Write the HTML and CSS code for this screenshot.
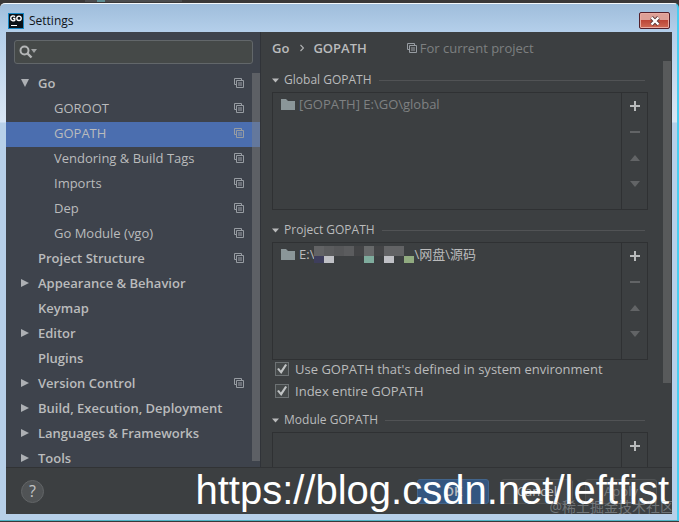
FILE: index.html
```html
<!DOCTYPE html>
<html lang="en">
<head>
<meta charset="utf-8">
<title>Settings</title>
<link rel="stylesheet" href="styles.css">
</head>
<body>
<svg class="defs" aria-hidden="true">
  <symbol id="copy" viewBox="0 0 10 10"><path d="M2.5 6.5H.5V.5h7v2M2.5 2.5h7v7h-7zM4 5h4M4 7h4" fill="none" stroke="currentColor"/></symbol>
  <symbol id="folder" viewBox="0 0 14 11"><path d="M0 0h5l2 2h7v9H0z" fill="#8b9699"/></symbol>
  <symbol id="right" viewBox="0 0 8 8"><path d="M0 0l8 4-8 4z" fill="currentColor"/></symbol>
  <symbol id="open" viewBox="0 0 8 8"><path d="M0 0h8L4 8z" fill="currentColor"/></symbol>
  <symbol id="down" viewBox="0 0 10 6"><path d="M0 0h10L5 6z" fill="currentColor"/></symbol>
  <symbol id="up" viewBox="0 0 10 6"><path d="M0 6h10L5 0z" fill="currentColor"/></symbol>
  <symbol id="plus" viewBox="0 0 10 10"><path d="M5 0v10M0 5h10" stroke="currentColor" stroke-width="2"/></symbol>
  <symbol id="minus" viewBox="0 0 10 10"><path d="M0 5h10" stroke="currentColor" stroke-width="2"/></symbol>
</svg>
<div class="backdrop"><span class="tab"></span></div>
<div class="window">
  <header class="titlebar">
    <svg class="logo" viewBox="0 0 16 16" aria-hidden="true"><path d="M0 0h16v16H0z" fill="#1787c4"/><path d="M1 1h14v14H1z" fill="#0a1218"/><path d="M7 3.600C5.500 2.300 2.700 2.700 2.700 5.300S5.600 8.400 6.800 7.200V5.500H5" fill="none" stroke="#fff" stroke-width="1.400"/><ellipse cx="11" cy="5.300" rx="2.200" ry="2.200" fill="none" stroke="#fff" stroke-width="1.400"/><path d="M3 12.500h6" stroke="#fff"/></svg>
    <h1>Settings</h1>
    <button class="close" aria-label="Close"><svg viewBox="0 0 12 10"><path d="M2.500 1.500l7 7M9.500 1.500l-7 7" stroke="#5a3535" stroke-width="4"/><path d="M2.500 1.500l7 7M9.500 1.500l-7 7" stroke="#fff" stroke-width="2.400"/></svg></button>
  </header>
  <div class="dialog">
    <div class="body">
      <aside class="sidebar">
        <div class="search">
          <svg viewBox="0 0 18 14" aria-hidden="true"><circle cx="5.500" cy="5.500" r="4" fill="none" stroke="#b4b6b7" stroke-width="2"/><path d="M8.500 8.500l4 4" stroke="#b4b6b7" stroke-width="2.400"/><path d="M12 4h6l-3 4z" fill="#a0a2a3"/></svg>
          <input type="text" aria-label="Search settings">
        </div>
        <ul class="tree">
          <li class="top"><svg class="arrow"><use href="#open"/></svg><span>Go</span><svg class="copy"><use href="#copy"/></svg></li>
          <li class="sub"><span>GOROOT</span><svg class="copy"><use href="#copy"/></svg></li>
          <li class="sub selected"><span>GOPATH</span><svg class="copy"><use href="#copy"/></svg></li>
          <li class="sub"><span>Vendoring &amp; Build Tags</span><svg class="copy"><use href="#copy"/></svg></li>
          <li class="sub"><span>Imports</span><svg class="copy"><use href="#copy"/></svg></li>
          <li class="sub"><span>Dep</span><svg class="copy"><use href="#copy"/></svg></li>
          <li class="sub"><span>Go Module (vgo)</span><svg class="copy"><use href="#copy"/></svg></li>
          <li class="top leaf"><span>Project Structure</span><svg class="copy"><use href="#copy"/></svg></li>
          <li class="top"><svg class="arrow"><use href="#right"/></svg><span>Appearance &amp; Behavior</span></li>
          <li class="top leaf"><span>Keymap</span></li>
          <li class="top"><svg class="arrow"><use href="#right"/></svg><span>Editor</span></li>
          <li class="top leaf"><span>Plugins</span></li>
          <li class="top"><svg class="arrow"><use href="#right"/></svg><span>Version Control</span><svg class="copy"><use href="#copy"/></svg></li>
          <li class="top"><svg class="arrow"><use href="#right"/></svg><span>Build, Execution, Deployment</span></li>
          <li class="top"><svg class="arrow"><use href="#right"/></svg><span>Languages &amp; Frameworks</span></li>
          <li class="top"><svg class="arrow"><use href="#right"/></svg><span>Tools</span></li>
        </ul>
        <div class="side-scroll"></div>
      </aside>
      <main class="page">
        <div class="crumbs"><b>Go</b><svg class="chevron" viewBox="0 0 4 8"><path d="M.5 1l3 3-3 3" fill="none" stroke="#b0b2b3" stroke-width="1.200"/></svg><b>GOPATH</b><span class="scope"><svg class="copy"><use href="#copy"/></svg>For current project</span></div>
        <section>
          <h2><svg><use href="#down"/></svg>Global GOPATH</h2>
          <div class="box">
            <div class="paths dim"><svg class="folder"><use href="#folder"/></svg><span>[GOPATH] E:\GO\global</span></div>
            <div class="tools">
              <button aria-label="Add" class="on"><svg><use href="#plus"/></svg></button>
              <button aria-label="Remove"><svg><use href="#minus"/></svg></button>
              <button aria-label="Move up"><svg class="tri"><use href="#up"/></svg></button>
              <button aria-label="Move down"><svg class="tri"><use href="#down"/></svg></button>
            </div>
          </div>
        </section>
        <section>
          <h2><svg><use href="#down"/></svg>Project GOPATH</h2>
          <div class="box">
            <div class="paths"><svg class="folder"><use href="#folder"/></svg><span>E:\</span><svg class="mosaic" viewBox="0 0 100 17" aria-hidden="true"><path d="M0 0h10v10H0z" fill="#626365"/><path d="M10 0h30v10H10z" fill="#5b5c5e"/><path d="M20 0h10v10H20z" fill="#565759"/><path d="M40 0h10v10H40zM60 0h10v10H60z" fill="#434446"/><path d="M50 0h10v10H50z" fill="#67696a"/><path d="M70 0h20v10H70z" fill="#626365"/><path d="M0 10h10v7H0z" fill="#3e3e5c"/><path d="M10 10h10v7H10zM70 10h10v7H70z" fill="#bfc0c5"/><path d="M50 10h10v7H50z" fill="#7fac9d"/><path d="M90 10h10v7H90z" fill="#91ab80"/></svg><span>\网盘\源码</span></div>
            <div class="tools">
              <button aria-label="Add" class="on"><svg><use href="#plus"/></svg></button>
              <button aria-label="Remove"><svg><use href="#minus"/></svg></button>
              <button aria-label="Move up"><svg class="tri"><use href="#up"/></svg></button>
              <button aria-label="Move down"><svg class="tri"><use href="#down"/></svg></button>
            </div>
          </div>
          <div class="checks">
            <label><input type="checkbox" checked>Use GOPATH that's defined in system environment</label>
            <label><input type="checkbox" checked>Index entire GOPATH</label>
          </div>
        </section>
        <section>
          <h2><svg><use href="#down"/></svg>Module GOPATH</h2>
          <div class="box">
            <div class="paths"></div>
            <div class="tools"><button aria-label="Add" class="on"><svg><use href="#plus"/></svg></button></div>
          </div>
        </section>
        <div class="page-scroll"></div>
      </main>
    </div>
    <footer class="footer">
      <button class="help" aria-label="Help">?</button>
      <button class="action primary">OK</button>
      <button class="action">Cancel</button>
      <button class="action off">Apply</button>
    </footer>
  </div>
</div>
<div class="url-mark">https://blog.csdn.net/leftfist</div>
<div class="site-mark">@稀土掘金技术社区</div>
</body>
</html>
```

FILE: styles.css
```css
* { box-sizing: border-box; }

body {
  margin: 0;
  height: 100vh;
  overflow: hidden;
  position: relative;
  display: flex;
  flex-direction: column;
  background: #3a3838;
  color: #babbbc;
  font: 13px/20px "Open Sans", "Noto Sans CJK SC", sans-serif;
}

.defs { position: absolute; width: 0; height: 0; }
svg { display: block; flex: none; }
button { padding: 0; border: 0; background: none; color: inherit; font: inherit; }
h1, h2 { margin: 0; font-weight: 400; }
b { font-weight: 600; }

.backdrop { height: 3px; flex: none; }
.tab { display: block; width: 97px; height: 2px; margin-left: 85px; background: linear-gradient(90deg, #4b4c4e 12px, #5d8d93 12px 20px, #4b4c4e 20px); }

.window {
  flex: 1;
  min-height: 0;
  display: flex;
  flex-direction: column;
  padding: 0 5px 6px 6px;
  border-top: 1px solid #f4f8fc;
  border-right: 2px solid #47cdf0;
  border-bottom: 1px solid #4fb3c4;
  border-radius: 5px 5px 0 0;
  background: linear-gradient(#9fbddb, #b4cfea 28px, #d3e2f2 100px, #d8e6f5 118px, #b7d0e9 119px);
  margin-bottom: 1px;
}

.titlebar { height: 28px; flex: none; display: flex; align-items: center; gap: 5px; padding: 5px 2px 0; }
.titlebar h1 { flex: 1; font-size: 12px; color: #10141a; }
.logo { width: 16px; height: 16px; }
.close {
  width: 31px;
  height: 17px;
  display: grid;
  place-items: center;
  border: 1px solid #53202b;
  border-radius: 2px;
  box-shadow: inset 0 0 0 1px #e9aaa0;
  background: linear-gradient(#dda097 45%, #bd4637 50%, #cf6a55);
}
.close svg { width: 12px; height: 10px; }

.dialog { flex: 1; min-height: 0; display: flex; flex-direction: column; background: #3c3f41; }
.body { flex: 1; min-height: 0; display: grid; grid-template-columns: 38.3% 1fr; border-bottom: 1px solid #313335; }

.sidebar { position: relative; min-height: 0; overflow: hidden; background: #3e434c; border-right: 1px solid #303338; }
.search {
  display: flex;
  align-items: center;
  height: 24px;
  margin: 8px 7px 8px 8px;
  padding: 0 4px;
  border: 1px solid #62676a;
  border-radius: 3px;
  background: #454948;
}
.search svg { width: 18px; height: 14px; }
.search input { flex: 1; min-width: 0; border: 0; outline: 0; background: none; color: inherit; font: inherit; }

.tree { list-style: none; margin: 0; padding: 0; }
.tree li { display: flex; align-items: center; height: 25px; padding: 0 16px 3px 15px; }
.tree span { flex: 1; white-space: nowrap; }
.tree .top { gap: 9px; font-weight: 600; }
.tree .leaf { padding-left: 32px; }
.tree .sub { padding-left: 48px; }
.tree .selected { background: #4b6eaf; }
.arrow { width: 8px; height: 8px; color: #adb0b4; }
.copy { width: 10px; height: 10px; color: #979ca2; }
.side-scroll { position: absolute; top: 41px; right: 0; bottom: 6px; width: 8px; background: rgba(130, 132, 132, .45); }

.page { position: relative; min-height: 0; overflow: hidden; padding: 6px 24px 0 11px; background: #3c3f41; }
.crumbs { display: flex; align-items: center; }
.chevron { width: 4px; height: 8px; margin: 0 9px 0 11px; }
.scope { display: flex; align-items: center; gap: 3px; margin-left: 40px; color: #7d7f80; }

h2 { display: flex; align-items: center; gap: 5px; height: 20px; font-size: 12px; }
h2 svg { width: 7px; height: 5px; }
h2::after { content: ""; flex: 1; height: 1px; margin: 0 3px 0 2px; background: #515355; }
section { padding-top: 12px; }
section + section { padding-top: 10px; }
.box { display: flex; height: 118px; margin-top: 2px; border: 1px solid #2f3133; }
.paths { flex: 1; display: flex; align-items: flex-start; padding: 1px 8px; }
.dim { color: #7f8182; }
.folder { width: 14px; height: 11px; margin: 5px 4px 0 0; }
.mosaic { width: 100px; height: 17px; margin-top: 2px; }
.tools { width: 26px; border-left: 1px solid #2f3133; color: #626466; }
.tools button { width: 100%; height: 26px; display: grid; place-items: center; }
.tools svg { width: 10px; height: 10px; }
.tools .tri { height: 6px; }
.tools .on { color: #b8babb; }

.checks { padding: 0 3px; margin: -2px 0; }
.checks label { display: flex; align-items: center; gap: 6px; height: 22px; }
.checks input {
  appearance: none;
  width: 14px;
  height: 14px;
  margin: 0;
  display: grid;
  place-items: center;
  border: 1px solid #6d7274;
  background: #45494a;
}
.checks input:checked::before {
  content: "";
  width: 10px;
  height: 10px;
  background: #c0c3c4;
  clip-path: polygon(0 50%, 18% 40%, 38% 66%, 82% 0, 100% 10%, 42% 100%);
}
.page-scroll { position: absolute; top: 29px; right: 1px; width: 8px; height: 322px; background: #585a5b; }

.footer { flex: none; height: 46px; display: flex; align-items: center; gap: 12px; padding: 0 15px; }
.help { width: 23px; height: 23px; margin-right: auto; border: 1px solid #626567; border-radius: 50%; background: #505355; font-size: 16px; line-height: 20px; color: #c3c5c6; }
.action { width: 72px; height: 25px; border: 1px solid #505355; border-radius: 3px; background: #434648; }
.primary { border-color: #42658c; background: #345680; font-weight: 600; }
.off { color: #777a7c; }

.url-mark { position: absolute; right: 10px; bottom: 9px; font: 40px/46px "Liberation Sans", sans-serif; color: #fff; white-space: nowrap; }
.site-mark { position: absolute; right: 5px; bottom: 5px; font-size: 14px; color: rgba(190, 195, 200, .42); white-space: nowrap; }
```
